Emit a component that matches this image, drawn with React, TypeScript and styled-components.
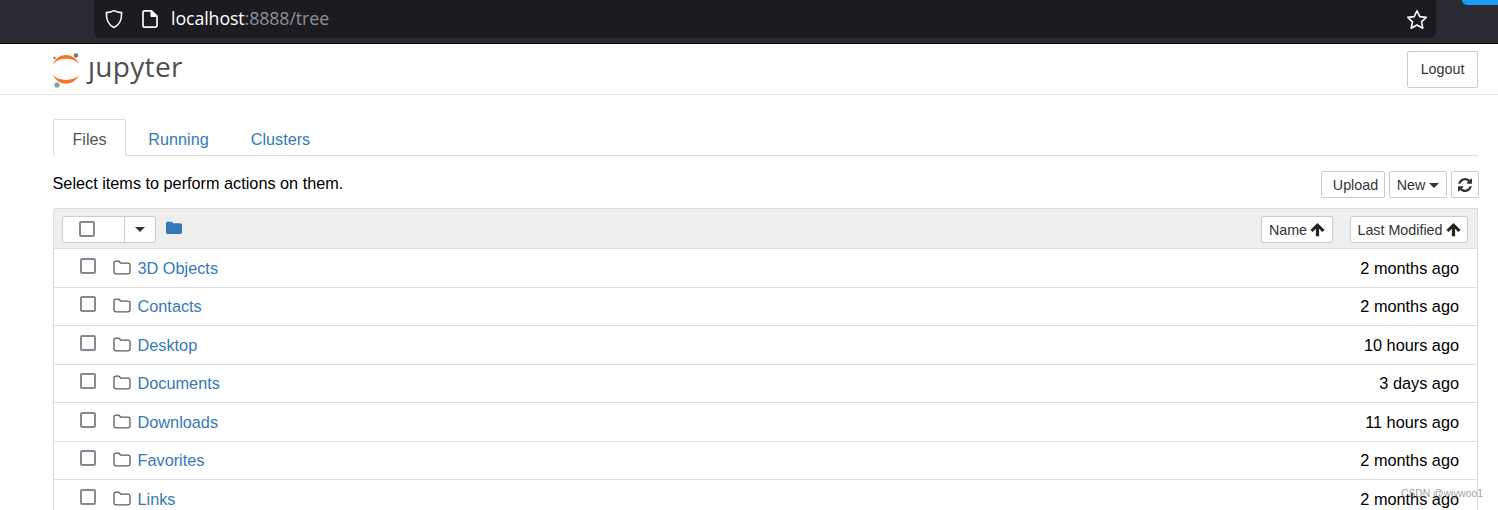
import React from "react";
import styled, { createGlobalStyle } from "styled-components";

const Global = createGlobalStyle`
  html, body { margin: 0; padding: 0; background: #fff; height: 510px; overflow: hidden; }
  body { font-family: "Liberation Sans", Arial, sans-serif; font-size: 16.2px; color: #000; }
`;
const Page = styled.div`position: relative; width: 1498px; height: 510px; overflow: hidden;`;
const BrowserBar = styled.div`
  height: 43px; background: #2b2a33; border-bottom: 1px solid #0c0c0d; display: flex; padding-left: 94px; position: relative;
`;
const UrlBar = styled.div`
  width: 1342px; height: 38px; background: #1c1b22; border-radius: 0 0 6px 6px; display: flex; align-items: center;
  padding: 0 8px 0 10px; box-sizing: border-box; color: #fff;
`;
const UrlText = styled.div`font-family: "Open Sans", "Liberation Sans", sans-serif; font-size: 17.8px; margin: -2px 0 0 12px; flex: 1; letter-spacing: -0.1px;`;
const UrlDim = styled.span`color: #8f8f96;`;
const BlueTab = styled.div`position: absolute; top: 0; left: 1462px; width: 36px; height: 5px; background: #1a9cf5; border-radius: 0 0 0 5px;`;
const Header = styled.div`
  height: 50px; border-bottom: 1px solid #e7e7e7; display: flex; align-items: center; justify-content: space-between;
  padding: 0 20px 0 52px;
`;
const Logo = styled.div`display: flex; align-items: center; margin-top: -1px;`;
const LogoText = styled.span`font-family: "Open Sans", sans-serif; font-size: 28px; color: #4e4e4e; margin-left: 6px; line-height: 30px; margin-top: -5px; letter-spacing: 0.3px;`;
const Btn = styled.div<{ $h: number; $w: number }>`
  box-sizing: border-box; height: ${p => p.$h}px; width: ${p => p.$w}px; background: #fff; border: 1px solid #ccc; border-radius: 2px;
  color: #333; font-size: 14.3px; display: flex; align-items: center; justify-content: center; gap: 3px; flex: none;
`;
const Main = styled.div`padding: 24px 20px 0 53px;`;
const Tabs = styled.div`display: flex; height: 36px; border-bottom: 1px solid #ddd;`;
const Tab = styled.div<{ $active?: boolean; $w: number }>`
  box-sizing: border-box; width: ${p => p.$w}px; height: ${p => (p.$active ? 37 : 36)}px; display: flex; align-items: center; justify-content: center;
  font-size: 16.2px; padding-top: 4px;
  color: ${p => (p.$active ? "#555" : "#337ab7")};
  ${p => p.$active ? "background: #fff; border: 1px solid #ddd; border-bottom-color: #fff; border-radius: 2px 2px 0 0;" : ""}
`;
const Toolbar = styled.div`height: 52px; display: flex; align-items: flex-start; justify-content: space-between; padding-top: 15px; box-sizing: border-box;`;
const Hint = styled.div`font-size: 16.25px; line-height: 24px; margin-left: -0.5px;`;
const Actions = styled.div`display: flex; gap: 4px; margin-right: -1px;`;
const UploadLabel = styled.span`padding-left: 5px;`;
const List = styled.div`border: 1px solid #ddd; border-bottom: none; border-radius: 2px 2px 0 0;`;
const ListHead = styled.div`height: 38px; background: #eee; border-bottom: 1px solid #ddd; display: flex; align-items: center; padding: 1px 9px 0 8px; box-sizing: content-box;`;
const Combo = styled.div`display: flex; width: 94px; height: 27px; box-sizing: border-box; background: #fff; border: 1px solid #ccc; border-radius: 2px;`;
const ComboLeft = styled.div`width: 62px; box-sizing: border-box; border-right: 1px solid #ccc; display: flex; align-items: center; padding-left: 16px;`;
const ComboRight = styled.div`flex: 1; display: flex; align-items: center; justify-content: center;`;
const Box = styled.div`box-sizing: border-box; width: 16px; height: 16px; border: 2px solid #8a8790; border-radius: 2px; background: #fff; flex: none;`;
const Caret = styled.div`width: 0; height: 0; border-left: 5px solid transparent; border-right: 5px solid transparent; border-top: 5px solid #333;`;
const SmallCaret = styled(Caret)`margin-left: 1px; margin-top: 2px;`;
const FolderBlue = styled.div`margin-left: 10px; margin-top: -3px; display: flex;`;
const Spacer = styled.div`flex: 1;`;
const HeadBtn = styled(Btn)`margin-left: 17px; padding-top: 1px;`;
const Row = styled.div`
  height: 37.5px; border-bottom: 1px solid #ddd; display: flex; align-items: center; padding: 0 18px 0 26px; font-size: 16.3px;
`;
const RowBox = styled(Box)`margin-top: -4px;`;
const RowFolder = styled.div`margin-left: 17px; margin-top: -1px; display: flex;`;
const RowLink = styled.div`color: #337ab7; margin-left: 6.5px; margin-top: 1px;`;
const RowTime = styled.div`color: #000; margin-top: 1px;`;
const Watermark = styled.div`position: absolute; left: 1401px; top: 488px; font-size: 10.3px; color: rgba(100,100,100,0.65); white-space: nowrap;`;

const FolderOutline = () => (
  <svg width="18" height="15" viewBox="0 0 18 15" fill="none" stroke="#5f5b5e" strokeWidth="1.3" strokeLinejoin="round">
    <path d="M1 3.2C1 2 1.8 1.2 2.8 1.2H6L7.8 3.2H15.2C16.3 3.2 17 4 17 5V12C17 13 16.3 13.8 15.2 13.8H2.8C1.800 13.8 1 13 1 12Z" />
  </svg>
);
const ArrowUp = () => (
  <svg width="15" height="15" viewBox="0 0 14 14" fill="#222">
    <path d="M7 1L13.6 7.5L11.6 9.4L8.5 6.4V13.2H5.5V6.4L2.4 9.4L0.4 7.5Z" />
  </svg>
);

const rows: [string, string][] = [
  ["3D Objects", "2 months ago"],
  ["Contacts", "2 months ago"],
  ["Desktop", "10 hours ago"],
  ["Documents", "3 days ago"],
  ["Downloads", "11 hours ago"],
  ["Favorites", "2 months ago"],
  ["Links", "2 months ago"],
];

export default function App() {
  return (
    <Page>
      <Global />
      <BrowserBar>
        <UrlBar>
          <svg width="20" height="20" viewBox="0 0 20 20" fill="none" stroke="#fbfbfe" strokeWidth="1.6" strokeLinejoin="round">
            <path d="M10 1.6C12.4 2.8 15 3.4 17.6 3.6C17.9 10.5 15.6 15.8 10 18.4C4.4 15.8 2.1 10.5 2.4 3.6C5 3.4 7.6 2.8 10 1.6Z" />
          </svg>
          <svg style={{ marginLeft: 17 }} width="18" height="20" viewBox="0 0 18 20" fill="none" stroke="#fbfbfe" strokeWidth="1.7" strokeLinejoin="round">
            <path d="M2 3.4C2 2.4 2.7 1.8 3.6 1.8H10.4L16 7.2V16.6C16 17.6 15.3 18.2 14.4 18.2H3.6C2.7 18.2 2 17.6 2 16.6Z" />
            <path d="M10.4 2V7.2H16" fill="#fbfbfe" />
          </svg>
          <UrlText>localhost<UrlDim>:8888/tree</UrlDim></UrlText>
          <svg width="22" height="21" viewBox="0 0 22 21" fill="none" stroke="#fbfbfe" strokeWidth="1.6" strokeLinejoin="round">
            <path d="M11 1.8L13.8 7.6L20.2 8.4L15.500 12.8L16.800 19.2L11 16L5.200 19.2L6.500 12.8L1.800 8.4L8.200 7.600Z" />
          </svg>
        </UrlBar>
        <BlueTab />
      </BrowserBar>
      <Header>
        <Logo>
          <svg width="30" height="38" viewBox="0 0 30 38">
            <circle cx="24" cy="5.5" r="2.2" fill="#767677" />
            <circle cx="2.5" cy="8" r="1.2" fill="#767677" />
            <circle cx="5" cy="35" r="2.6" fill="#989798" />
            <path d="M1 14C6 2 22 2 27 14C21 7 7 7 1 14Z" fill="#f37726" />
            <path d="M1 25C7 31.500 21 31.500 27 25C22 36.500 6 36.500 1 25Z" fill="#f37726" />
          </svg>
          <LogoText>ȷupyter</LogoText>
        </Logo>
        <Btn $h={37} $w={71}>Logout</Btn>
      </Header>
      <Main>
        <Tabs>
          <Tab $active $w={73}>Files</Tab>
          <Tab $w={105}>Running</Tab>
          <Tab $w={99}>Clusters</Tab>
        </Tabs>
        <Toolbar>
          <Hint>Select items to perform actions on them.</Hint>
          <Actions>
            <Btn $h={27} $w={64}><UploadLabel>Upload</UploadLabel></Btn>
            <Btn $h={27} $w={58}>New<SmallCaret /></Btn>
            <Btn $h={27} $w={28}>
              <svg width="14" height="14" viewBox="0 0 1536 1536" fill="#333">
                <path d="M1511 928q0 5-1 7-64 268-268 434.5T764 1536q-146 0-282.500-55T238 1324l-129 129q-19 19-45 19t-45-19-19-45V960q0-26 19-45t45-19h448q26 0 45 19t19 45-19 45l-137 137q71 66 161 102t187 36q134 0 250-65t186-179q11-17 53-117 8-23 30-23h192q13 0 22.500 9.500t9.500 22.500zm25-800v448q0 26-19 45t-45 19h-448q-26 0-45-19t-19-45 19-45l138-138Q969 256 768 256q-134 0-250 65T332 500q-11 17-53 117-8 23-30 23H50q-13 0-22.500-9.500T18 608v-7q65-268 270-434.500T768 0q146 0 284 55.500T1297 212l130-129q19-19 45-19t45 19 19 45z" />
              </svg>
            </Btn>
          </Actions>
        </Toolbar>
        <List>
          <ListHead>
            <Combo>
              <ComboLeft><Box /></ComboLeft>
              <ComboRight><Caret /></ComboRight>
            </Combo>
            <FolderBlue>
              <svg width="16" height="14" viewBox="0 0 16 14" fill="#337ab7">
                <path d="M0 2.5C0 1.4.8.8 1.6.8H5.4C6.2.8 6.6 1.3 6.8 2.2H14.2C15.2 2.200 16 3 16 4V11.200C16 12.200 15.200 13 14.200 13H1.800C.8 13 0 12.200 0 11.200Z" />
              </svg>
            </FolderBlue>
            <Spacer />
            <HeadBtn $h={27} $w={72}>Name<ArrowUp /></HeadBtn>
            <HeadBtn $h={27} $w={118}>Last Modified<ArrowUp /></HeadBtn>
          </ListHead>
          {rows.map(([name, time]) => (
            <Row key={name}>
              <RowBox />
              <RowFolder><FolderOutline /></RowFolder>
              <RowLink>{name}</RowLink>
              <Spacer />
              <RowTime>{time}</RowTime>
            </Row>
          ))}
        </List>
      </Main>
      <Watermark>CSDN @wjywoo1</Watermark>
    </Page>
  );
}
